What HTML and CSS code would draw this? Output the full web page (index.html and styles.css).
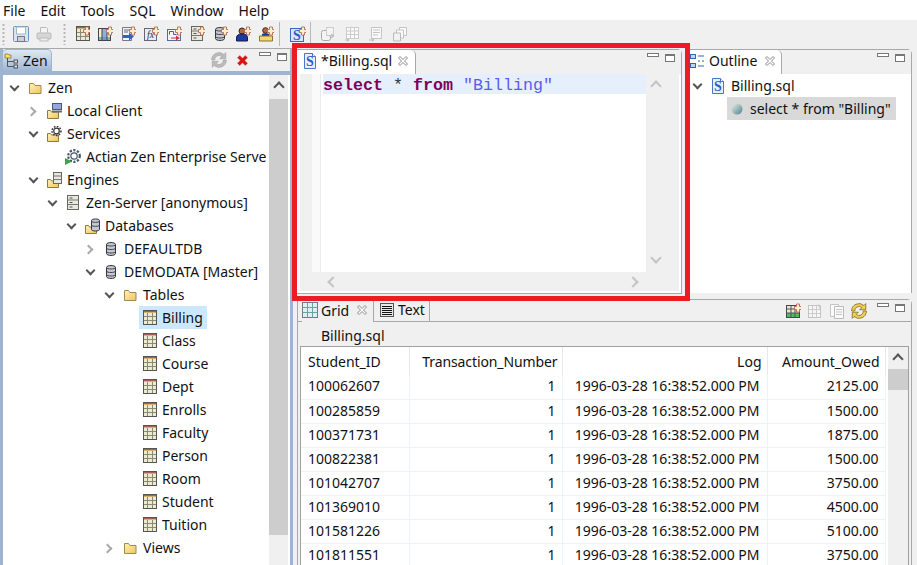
FILE: index.html
```html
<!DOCTYPE html>
<html>
<head>
  <meta charset="UTF-8">
  <title>Zen Explorer</title>
  <link rel="stylesheet" href="styles.css">
</head>
<body>
  <!-- Icon sheet -->
  <svg class="icon-sheet" xmlns="http://www.w3.org/2000/svg">
    <defs>
      <linearGradient id="folderFill" x1="0" y1="0" x2="1" y2="1">
        <stop offset="0" stop-color="#fdf3b8"/><stop offset="1" stop-color="#f0c45c"/>
      </linearGradient>
      <linearGradient id="ballFill" x1="0" y1="0" x2="1" y2="1">
        <stop offset="0" stop-color="#e8f2e8"/><stop offset="1" stop-color="#4f7f8f"/>
      </linearGradient>
      <symbol id="plus" viewBox="0 0 16 16">
        <path d="M9.5 3.500h2v-2.500h3v2.500h2v3h-2v2.500h-3v-2.500h-2z" fill="#fdf0c8" stroke="#b8685c" stroke-width=".9"/>
      </symbol>
      <symbol id="table" viewBox="0 0 16 16">
        <rect x="2.500" y=".5" width="13" height="14" fill="#ecebd0" stroke="#555"/>
        <path d="M3 1.500h12" stroke="#a8605c"/>
        <path d="M3 2.500h12" stroke="#d8b070"/>
        <path d="M3 6.500h12M3 10.500h12M6.500 3v11M11.500 3v11" stroke="#8a8a78"/>
      </symbol>
      <symbol id="folder" viewBox="0 0 16 16">
        <path d="M2.500 13.500v-10h4l1.500 2h6v8z" fill="url(#folderFill)" stroke="#a08a50"/>
      </symbol>
      <symbol id="folder-low" viewBox="0 0 16 16">
        <path d="M1.500 15.500v-8h3l1 1.500h7v6.500z" fill="url(#folderFill)" stroke="#8f7a40"/>
      </symbol>
      <symbol id="monitor" viewBox="0 0 16 16">
        <rect x="6.500" y=".5" width="9" height="6" fill="#8fa8e0" stroke="#556"/>
        <path d="M6 8.500h10" stroke="#667" stroke-width="2"/>
      </symbol>
      <symbol id="cog" viewBox="0 0 16 16">
        <circle cx="10.500" cy="5" r="2.800" fill="#fff" stroke="#333" stroke-width="1.200"/>
        <circle cx="10.500" cy="5" r="4.500" fill="none" stroke="#333" stroke-width="1.500" stroke-dasharray="1.500 1.500"/>
      </symbol>
      <symbol id="rack" viewBox="0 0 16 16">
        <rect x="2.500" y=".5" width="11" height="14" fill="#e8e8dc" stroke="#666"/>
        <path d="M3 5h10M3 9.500h10" stroke="#777"/>
        <path d="M4.500 3h3M4.500 7.500h3M4.500 12h3" stroke="#555"/>
      </symbol>
      <symbol id="rack-small" viewBox="0 0 16 16">
        <rect x="7.500" y=".5" width="8" height="11" fill="#e8e8dc" stroke="#666"/>
        <path d="M8 4h7M8 7.500h7" stroke="#777"/>
      </symbol>
      <symbol id="db" viewBox="0 0 16 16">
        <path d="M3.500 3.500c0-2.600 9-2.600 9 0v9c0 2.600-9 2.600-9 0z" fill="#c4c8d0" stroke="#333"/>
        <path d="M3.500 3.500c0 2 9 2 9 0M3.500 7c0 2 9 2 9 0M3.500 10.500c0 2 9 2 9 0" fill="none" stroke="#445"/>
      </symbol>
      <symbol id="db-small" viewBox="0 0 16 16">
        <path d="M7.500 2.500c0-2 8-2 8 0v9c0 2-8 2-8 0z" fill="#c4c8d0" stroke="#334"/>
        <path d="M7.500 3c0 1.800 8 1.800 8 0M7.500 7c0 1.800 8 1.800 8 0" fill="none" stroke="#445"/>
      </symbol>
      <symbol id="gear-run" viewBox="0 0 16 16">
        <circle cx="9" cy="7" r="3.200" fill="#fff" stroke="#456" stroke-width="1.200"/>
        <circle cx="9" cy="7" r="5.800" fill="none" stroke="#456" stroke-width="2.200" stroke-dasharray="2.200 1.500"/>
        <path d="M0 9l7 3.500-7 3.500z" fill="#3ea04a"/>
      </symbol>
      <symbol id="sql" viewBox="0 0 16 16">
        <path d="M2.500 .5h8l3 3v12h-11z" fill="#eaf0fb" stroke="#4a74c4"/>
        <path d="M10.500 .5v3h3" fill="#fff" stroke="#4a74c4"/>
        <text x="8" y="13" class="svg-s">S</text>
      </symbol>
      <symbol id="sql-box" viewBox="0 0 16 16">
        <rect x=".5" y="2.500" width="13" height="13" fill="#d8e4f8" stroke="#3f66b8"/>
        <text x="7" y="13.500" class="svg-s">S</text>
      </symbol>
      <symbol id="close-x" viewBox="0 0 12 12">
        <path d="M1.500 3l1.500-1.500 3 3 3-3 1.500 1.500-3 3 3 3-1.500 1.500-3-3-3 3-1.500-1.500 3-3z" fill="#fff" stroke="#8c8c8c"/>
      </symbol>
      <symbol id="save" viewBox="0 0 16 16">
        <rect x=".500" y=".500" width="15" height="15" rx="1" fill="#d8e6f4" stroke="#6f93c0"/>
        <rect x="3.500" y="1" width="9" height="7" fill="#fff" stroke="#9fb6d0"/>
        <rect x="4.500" y="10.500" width="7" height="5" fill="#cfcfcf" stroke="#778"/>
      </symbol>
      <symbol id="print" viewBox="0 0 16 16">
        <path d="M4.500 6.500v-5h6l1 1v4" fill="#f4f4f4" stroke="#bbb"/>
        <rect x="1" y="7" width="14" height="6" rx="1" fill="#d6d6d6" stroke="#bbb"/>
        <rect x="4" y="12" width="8" height="3" fill="#eee" stroke="#bbb"/>
      </symbol>
      <symbol id="view" viewBox="0 0 16 16">
        <rect x="1.500" y="2.500" width="12" height="12" fill="#f4f0c0" stroke="#445"/>
        <rect x="5" y="3" width="5" height="11" fill="#8fb0d8"/>
        <path d="M2 12.500h11" stroke="#5a9ac0" stroke-width="3" opacity=".7"/>
        <path d="M5 3v11M10 3v11" stroke="#445"/>
      </symbol>
      <symbol id="proc" viewBox="0 0 16 16">
        <path d="M2.500 1.500h9v13h-9z" fill="#f4f4f4" stroke="#778"/>
        <path d="M4 4h6M4 6h4" stroke="#667"/>
        <path d="M3 9h6v-2.500l5 4-5 4v-2.500h-6z" fill="#2f64c0"/>
      </symbol>
      <symbol id="fx" viewBox="0 0 16 16">
        <rect x="1.500" y="2.500" width="12" height="12" fill="#e8ecf4" stroke="#667"/>
        <text x="7.500" y="12" class="svg-fx">fx</text>
      </symbol>
      <symbol id="trigger" viewBox="0 0 16 16">
        <rect x="1.500" y="3.500" width="13" height="11" fill="#f4f4fa" stroke="#5a6a9a"/>
        <path d="M3.500 8.500v-3h4v3h3" fill="none" stroke="#3a5fb0"/>
        <path d="M5 11.500h5v-2l4 2.500-4 2.500v-2h-5z" fill="#d03838"/>
      </symbol>
      <symbol id="user" viewBox="0 0 16 16">
        <circle cx="7" cy="5" r="3" fill="#b06840" stroke="#402820"/>
        <path d="M1.500 15v-3c0-3 2-4 5.500-4s5.500 1 5.500 4v3z" fill="#1c3aa0" stroke="#101c50"/>
      </symbol>
      <symbol id="user-folder" viewBox="0 0 16 16">
        <circle cx="7.500" cy="4.500" r="2.800" fill="#b06840" stroke="#402820"/>
        <path d="M4 8c1-1 6-1 7 0v2h-7z" fill="#1c3aa0"/>
        <path d="M1.500 15v-5h13v5z" fill="#f5d670" stroke="#8a7430"/>
      </symbol>
      <symbol id="dim-join" viewBox="0 0 16 16">
        <rect x="1.500" y="4.500" width="9" height="10" rx="2" fill="#f4f4f4" stroke="#aaa"/>
        <rect x="6.500" y="1.500" width="7" height="8" fill="#f4f4f4" stroke="#ccc"/>
        <path d="M9 10h5M11 8l3 2-3 2" fill="none" stroke="#bbb"/>
      </symbol>
      <symbol id="dim-grid" viewBox="0 0 16 16">
        <rect x="2.500" y="1.500" width="12" height="11" fill="#fafafa" stroke="#ccc"/>
        <path d="M2.500 5h12M2.500 8.500h12M6.500 1.500v11M10.500 1.500v11" stroke="#ccc"/>
        <path d="M1 14h4M3 12.500l2 1.500-2 1.500" fill="none" stroke="#bbb"/>
      </symbol>
      <symbol id="dim-doc" viewBox="0 0 16 16">
        <path d="M3.500 1.500h10v11h-10z" fill="#fafafa" stroke="#c4c4c4"/>
        <path d="M5 4h7M5 6.500h7M5 9h5" stroke="#c4c4c4"/>
        <path d="M1 14h5M4 12.500l2 1.500-2 1.500" fill="none" stroke="#bbb"/>
      </symbol>
      <symbol id="dim-copy" viewBox="0 0 16 16">
        <path d="M7.500 1.500h7v8h-7z" fill="#fafafa" stroke="#c4c4c4"/>
        <path d="M4.500 4h7v8h-7z" fill="#fafafa" stroke="#c4c4c4"/>
        <path d="M1.500 7h7v8h-7z" fill="#f2f2f2" stroke="#bbb"/>
      </symbol>
      <symbol id="sync-off" viewBox="1.500 1.500 13 13">
        <path d="M2 8a6 6 0 0 1 10-4.500l1.500-1.500v5h-5l1.800-1.800a3.500 3.500 0 0 0-5.800 2.800zM14 8a6 6 0 0 1-10 4.500l-1.500 1.500v-5h5l-1.800 1.800a3.500 3.500 0 0 0 5.800-2.800z" fill="#bbb" stroke="#a4a4a4" stroke-width=".5"/>
      </symbol>
      <symbol id="sync-on" viewBox="1.500 1.500 13 13">
        <path d="M2 8a6 6 0 0 1 10-4.500l1.500-1.500v5h-5l1.800-1.800a3.500 3.500 0 0 0-5.800 2.800zM14 8a6 6 0 0 1-10 4.500l-1.500 1.500v-5h5l-1.800 1.800a3.500 3.500 0 0 0 5.800-2.800z" fill="#f0d050" stroke="#776020" stroke-width=".6"/>
      </symbol>
      <symbol id="red-x" viewBox="0 0 12 12">
        <path d="M.5 3l2.500-2.500 3 3 3-3 2.500 2.500-3 3 3 3-2.500 2.500-3-3-3 3-2.500-2.500 3-3z" fill="#e01010" stroke="#c06060" stroke-width=".5"/>
      </symbol>
      <symbol id="tree-tab" viewBox="0 0 16 16">
        <path d="M1 5v-4h3l1 1h2v3z" fill="#f8dc70" stroke="#907830" stroke-width=".8"/>
        <path d="M3.500 5v8.500h6M3.500 8.500h6" fill="none" stroke="#555"/>
        <rect x="10" y="7" width="3.500" height="3" fill="#dde" stroke="#333" stroke-width=".8"/>
        <rect x="10" y="12" width="3.500" height="3" fill="#dde" stroke="#333" stroke-width=".8"/>
      </symbol>
      <symbol id="outline-tab" viewBox="0 0 16 16">
        <rect x=".5" y="1.500" width="5" height="4" fill="#b8d8f4" stroke="#2a68b8"/>
        <rect x=".5" y="10.500" width="5" height="4" fill="#b8d8f4" stroke="#2a68b8"/>
        <path d="M8 3h6M8 8h2M12 8h2M8 13h6" stroke="#2a68b8"/>
      </symbol>
      <symbol id="grid-tab" viewBox="0 0 16 16">
        <rect x=".5" y=".5" width="15" height="15" fill="#dff0ee" stroke="#778"/>
        <path d="M.5 5.500h15M.5 10.500h15M5.500 .5v15M10.500 .5v15" stroke="#60a8a4"/>
      </symbol>
      <symbol id="text-tab" viewBox="0 0 16 16">
        <rect x="1.500" y="1.500" width="13" height="13" fill="#e8e8e8" stroke="#555"/>
        <path d="M3 4.500h10M3 6.500h10M3 8.500h10M3 10.500h10M3 12.500h10" stroke="#111"/>
      </symbol>
      <symbol id="grid-add" viewBox="0 0 16 16">
        <rect x="1.500" y="2.500" width="13" height="12" fill="#e8e8c8" stroke="#445"/>
        <path d="M2 10h12v4h-12z" fill="#58b858"/>
        <path d="M2 6h12M2 10h12M6 3v11M10 3v11" stroke="#556"/>
      </symbol>
      <symbol id="grid-edit" viewBox="0 0 16 16">
        <rect x="1.500" y="2.500" width="12" height="12" fill="#f6f6f6" stroke="#c4c4c4"/>
        <path d="M2 6.500h11M2 10.500h11M5.500 3v11M9.500 3v11" stroke="#ccc"/>
        <path d="M11 1l3 2-2 3z" fill="#ccc"/>
      </symbol>
      <symbol id="grid-copy" viewBox="0 0 16 16">
        <path d="M1.500 1.500h8v12h-8z" fill="#fafafa" stroke="#c4c4c4"/>
        <path d="M5.500 3.500h9v12h-9z" fill="#fafafa" stroke="#bbb"/>
        <path d="M7 6.500h6M7 9h6M7 11.500h6" stroke="#c4c4c4"/>
      </symbol>
    </defs>
  </svg>

  <div class="menubar">
    <span class="menu-item">File</span>
    <span class="menu-item">Edit</span>
    <span class="menu-item">Tools</span>
    <span class="menu-item">SQL</span>
    <span class="menu-item">Window</span>
    <span class="menu-item">Help</span>
  </div>

  <div class="toolbar">
    <div class="grip"></div>
    <div class="tool-group file-tools">
      <svg class="tool-icon"><use href="#save"/></svg>
      <svg class="tool-icon"><use href="#print"/></svg>
    </div>
    <div class="grip"></div>
    <div class="tool-group new-tools">
      <svg class="tool-icon"><use href="#table"/><use href="#plus"/></svg>
      <svg class="tool-icon"><use href="#view"/><use href="#plus"/></svg>
      <svg class="tool-icon"><use href="#proc"/><use href="#plus"/></svg>
      <svg class="tool-icon"><use href="#fx"/><use href="#plus"/></svg>
      <svg class="tool-icon"><use href="#trigger"/><use href="#plus"/></svg>
      <svg class="tool-icon"><use href="#rack"/><use href="#plus"/></svg>
      <svg class="tool-icon"><use href="#db"/><use href="#plus"/></svg>
      <svg class="tool-icon"><use href="#user"/><use href="#plus"/></svg>
      <svg class="tool-icon"><use href="#user-folder"/><use href="#plus"/></svg>
    </div>
    <div class="tool-sep"></div>
    <svg class="tool-icon"><use href="#sql-box"/><use href="#plus"/></svg>
    <div class="tool-sep short"></div>
    <div class="tool-group dim-tools">
      <svg class="tool-icon"><use href="#dim-join"/></svg>
      <svg class="tool-icon"><use href="#dim-grid"/></svg>
      <svg class="tool-icon"><use href="#dim-doc"/></svg>
      <svg class="tool-icon"><use href="#dim-copy"/></svg>
    </div>
  </div>

  <div class="workbench">
    <div class="explorer">
      <div class="explorer-tabs">
        <div class="explorer-tab">
          <svg class="tab-icon"><use href="#tree-tab"/></svg>
          <span>Zen</span>
        </div>
        <div class="pane-actions">
          <svg class="action-icon sync-icon"><use href="#sync-off"/></svg>
          <svg class="red-x"><use href="#red-x"/></svg>
          <span class="pane-min"></span>
          <span class="pane-max"></span>
        </div>
      </div>
      <div class="explorer-body">
        <div class="tree">
          <div class="tree-row lvl-0"><span class="twist open"></span><span class="node"><svg class="node-icon"><use href="#folder"/></svg>Zen</span></div>
          <div class="tree-row lvl-1"><span class="twist closed"></span><span class="node"><svg class="node-icon"><use href="#folder-low"/><use href="#monitor"/></svg>Local Client</span></div>
          <div class="tree-row lvl-1"><span class="twist open"></span><span class="node"><svg class="node-icon"><use href="#folder-low"/><use href="#cog"/></svg>Services</span></div>
          <div class="tree-row lvl-2"><span class="twist"></span><span class="node"><svg class="node-icon"><use href="#gear-run"/></svg>Actian Zen Enterprise Server</span></div>
          <div class="tree-row lvl-1"><span class="twist open"></span><span class="node"><svg class="node-icon"><use href="#folder-low"/><use href="#rack-small"/></svg>Engines</span></div>
          <div class="tree-row lvl-2"><span class="twist open"></span><span class="node"><svg class="node-icon"><use href="#rack"/></svg>Zen-Server [anonymous]</span></div>
          <div class="tree-row lvl-3"><span class="twist open"></span><span class="node"><svg class="node-icon"><use href="#folder-low"/><use href="#db-small"/></svg>Databases</span></div>
          <div class="tree-row lvl-4"><span class="twist closed"></span><span class="node"><svg class="node-icon"><use href="#db"/></svg>DEFAULTDB</span></div>
          <div class="tree-row lvl-4"><span class="twist open"></span><span class="node"><svg class="node-icon"><use href="#db"/></svg>DEMODATA [Master]</span></div>
          <div class="tree-row lvl-5"><span class="twist open"></span><span class="node"><svg class="node-icon"><use href="#folder"/></svg>Tables</span></div>
          <div class="tree-row lvl-6"><span class="twist"></span><span class="node selected"><svg class="node-icon"><use href="#table"/></svg>Billing</span></div>
          <div class="tree-row lvl-6"><span class="twist"></span><span class="node"><svg class="node-icon"><use href="#table"/></svg>Class</span></div>
          <div class="tree-row lvl-6"><span class="twist"></span><span class="node"><svg class="node-icon"><use href="#table"/></svg>Course</span></div>
          <div class="tree-row lvl-6"><span class="twist"></span><span class="node"><svg class="node-icon"><use href="#table"/></svg>Dept</span></div>
          <div class="tree-row lvl-6"><span class="twist"></span><span class="node"><svg class="node-icon"><use href="#table"/></svg>Enrolls</span></div>
          <div class="tree-row lvl-6"><span class="twist"></span><span class="node"><svg class="node-icon"><use href="#table"/></svg>Faculty</span></div>
          <div class="tree-row lvl-6"><span class="twist"></span><span class="node"><svg class="node-icon"><use href="#table"/></svg>Person</span></div>
          <div class="tree-row lvl-6"><span class="twist"></span><span class="node"><svg class="node-icon"><use href="#table"/></svg>Room</span></div>
          <div class="tree-row lvl-6"><span class="twist"></span><span class="node"><svg class="node-icon"><use href="#table"/></svg>Student</span></div>
          <div class="tree-row lvl-6"><span class="twist"></span><span class="node"><svg class="node-icon"><use href="#table"/></svg>Tuition</span></div>
          <div class="tree-row lvl-5"><span class="twist closed"></span><span class="node"><svg class="node-icon"><use href="#folder"/></svg>Views</span></div>
        </div>
        <div class="scrollbar tree-scroll">
          <span class="arrow-up"></span>
          <div class="thumb"></div>
        </div>
      </div>
    </div>

    <div class="right-side">
      <div class="top-row">
        <div class="editor-pane">
          <div class="tab-strip">
            <div class="tab white-tab editor-tab">
              <svg class="tab-icon"><use href="#sql"/></svg>
              <span>*Billing.sql</span>
              <svg class="tab-close"><use href="#close-x"/></svg>
            </div>
            <div class="pane-actions">
              <span class="pane-min"></span>
              <span class="pane-max"></span>
            </div>
          </div>
          <div class="editor-body">
            <div class="ruler"></div>
            <div class="ruler-light"></div>
            <div class="code-area">
              <div class="code-line"><span class="kw">select</span> <span class="star">*</span> <span class="kw">from</span> <span class="str">"Billing"</span></div>
            </div>
            <div class="editor-vbar"><span class="arrow-up dim"></span><span class="arrow-down dim"></span></div>
            <div class="editor-hbar"><span class="arrow-left"></span><span class="arrow-right"></span></div>
          </div>
        </div>

        <div class="outline-pane">
          <div class="tab-strip">
            <div class="tab white-tab outline-tab">
              <svg class="tab-icon"><use href="#outline-tab"/></svg>
              <span>Outline</span>
              <svg class="tab-close"><use href="#close-x"/></svg>
            </div>
            <div class="pane-actions">
              <span class="pane-min"></span>
              <span class="pane-max"></span>
            </div>
          </div>
          <div class="outline-body">
            <div class="outline-row"><span class="twist open"></span><span class="node"><svg class="node-icon"><use href="#sql"/></svg>Billing.sql</span></div>
            <div class="outline-row child"><span class="node stmt"><svg class="ball" viewBox="0 0 12 12"><circle cx="6" cy="6" r="5.500" fill="url(#ballFill)"/></svg>select * from "Billing"</span></div>
          </div>
        </div>
      </div>

      <div class="results-pane">
        <div class="tab-strip results-strip">
          <div class="tab grid-tab">
            <svg class="tab-icon"><use href="#grid-tab"/></svg>
            <span>Grid</span>
            <svg class="tab-close"><use href="#close-x"/></svg>
          </div>
          <div class="tab text-tab">
            <svg class="tab-icon"><use href="#text-tab"/></svg>
            <span>Text</span>
          </div>
          <div class="pane-actions">
            <svg class="action-icon"><use href="#grid-add"/><use href="#plus"/></svg>
            <svg class="action-icon"><use href="#grid-edit"/></svg>
            <svg class="action-icon"><use href="#grid-copy"/></svg>
            <svg class="action-icon last-action"><use href="#sync-on"/></svg>
            <span class="pane-min"></span>
            <span class="pane-max"></span>
          </div>
        </div>
        <div class="results-label">Billing.sql</div>
        <div class="grid-frame">
          <table class="data-grid">
            <thead>
              <tr><th class="col-id">Student_ID</th><th class="col-num">Transaction_Number</th><th class="col-log">Log</th><th class="col-amt">Amount_Owed</th></tr>
            </thead>
            <tbody>
              <tr><td>100062607</td><td>1</td><td class="cell-log">1996-03-28 16:38:52.000 PM</td><td>2125.00</td></tr>
              <tr><td>100285859</td><td>1</td><td class="cell-log">1996-03-28 16:38:52.000 PM</td><td>1500.00</td></tr>
              <tr><td>100371731</td><td>1</td><td class="cell-log">1996-03-28 16:38:52.000 PM</td><td>1875.00</td></tr>
              <tr><td>100822381</td><td>1</td><td class="cell-log">1996-03-28 16:38:52.000 PM</td><td>1500.00</td></tr>
              <tr><td>101042707</td><td>1</td><td class="cell-log">1996-03-28 16:38:52.000 PM</td><td>3750.00</td></tr>
              <tr><td>101369010</td><td>1</td><td class="cell-log">1996-03-28 16:38:52.000 PM</td><td>4500.00</td></tr>
              <tr><td>101581226</td><td>1</td><td class="cell-log">1996-03-28 16:38:52.000 PM</td><td>5100.00</td></tr>
              <tr><td>101811551</td><td>1</td><td class="cell-log">1996-03-28 16:38:52.000 PM</td><td>3750.00</td></tr>
            </tbody>
          </table>
          <div class="scrollbar grid-scroll">
            <span class="arrow-up"></span>
            <div class="thumb"></div>
          </div>
        </div>
      </div>
    </div>
  </div>

  <!-- Red callout drawn over the editor -->
  <div class="callout"></div>
</body>
</html>
```

FILE: styles.css
```css
html, body {
  height: 100%;
}
body {
  margin: 0;
  height: 565px;
  overflow: hidden;
  position: relative;
  display: flex;
  flex-direction: column;
  background-color: #f0f0f0;
  font-family: "Noto Sans", sans-serif;
  font-size: 14px;
  color: #111;
}
svg {
  display: block;
  flex: none;
}
.icon-sheet {
  position: absolute;
  width: 0;
  height: 0;
}
.svg-s {
  font-family: "Liberation Serif", serif;
  font-weight: bold;
  font-size: 14px;
  fill: #2f5cc0;
  text-anchor: middle;
}
.svg-fx {
  font-family: "Liberation Serif", serif;
  font-style: italic;
  font-size: 10px;
  fill: #334;
  text-anchor: middle;
}

/* menu and toolbar */
.menubar {
  height: 20px;
  flex: none;
  display: flex;
  align-items: center;
  background-color: #fff;
}
.menu-item {
  margin-left: 3px;
  margin-right: 12px;
}
.toolbar {
  height: 28px;
  flex: none;
  display: flex;
  align-items: center;
  box-sizing: border-box;
  padding-left: 2px;
}
.grip {
  width: 3px;
  height: 22px;
  background-image: radial-gradient(circle, #b4b4b4 1px, transparent 1.2px);
  background-size: 3px 4px;
}
.tool-group {
  display: flex;
  gap: 7px;
}
.file-tools {
  margin: 0 11px 0 8px;
}
.new-tools {
  margin-left: 8px;
}
.dim-tools {
  gap: 8px;
}
.tool-icon {
  width: 16px;
  height: 16px;
}
.tool-sep {
  width: 1px;
  height: 24px;
  background-color: #b8b8b8;
  margin: 0 10px 0 5px;
}
.tool-sep.short {
  margin: 0 9px 0 4px;
}

/* workbench */
.workbench {
  flex: 1;
  display: flex;
  min-height: 0;
}
.explorer {
  width: 293px;
  flex: none;
  display: flex;
  flex-direction: column;
  box-sizing: border-box;
  border-right: 3px solid #9fb4cf;
  border-left: 3px solid #9fb4cf;
}
.explorer-tabs {
  height: 27px;
  flex: none;
  display: flex;
  box-sizing: border-box;
  border-top: 1px solid #a8a8a8;
  border-bottom: 4px solid #9fb4cf;
  margin-left: -3px;
}
.explorer-tab {
  width: 50px;
  margin-left: 2px;
  display: flex;
  align-items: center;
  padding-left: 1px;
  box-sizing: border-box;
  border-radius: 5px 5px 0 0;
  border: 1px solid #9fb4cf;
  border-bottom: none;
  background: linear-gradient(#dfe8f2, #9db6d4);
}
.pane-actions {
  margin-left: auto;
  display: flex;
  align-items: flex-start;
}
.action-icon {
  width: 16px;
  height: 16px;
  margin-right: 6px;
  margin-top: 3px;
}
.last-action {
  margin-right: 10px;
}
.sync-icon {
  margin-top: 3px;
  margin-right: 10px;
}
.red-x {
  width: 11px;
  height: 11px;
  margin-top: 6px;
  margin-right: 11px;
}
.pane-min {
  width: 10px;
  height: 2px;
  margin-top: 3px;
  border: 1px solid #777;
  background-color: #fff;
  margin-right: 6px;
}
.pane-max {
  width: 8px;
  height: 5px;
  margin-top: 4px;
  border: 1px solid #777;
  border-top-width: 2px;
  background-color: #fff;
  margin-right: 6px;
}
.explorer-tabs .pane-max {
  margin-right: 3px;
}
.explorer-body {
  flex: 1;
  display: flex;
  background-color: #fff;
  min-height: 0;
}
.tree {
  width: 266px;
  flex: none;
  overflow: hidden;
  margin-left: -3px;
  padding-top: 1px;
}
.tree-row {
  height: 23px;
  display: flex;
  align-items: center;
  white-space: nowrap;
}
.lvl-0 { padding-left: 7px; }
.lvl-1 { padding-left: 26px; }
.lvl-2 { padding-left: 45px; }
.lvl-3 { padding-left: 64px; }
.lvl-4 { padding-left: 83px; }
.lvl-5 { padding-left: 102px; }
.lvl-6 { padding-left: 121px; }
.twist {
  width: 20px;
  height: 16px;
  flex: none;
  position: relative;
}
.twist.open::before,
.twist.closed::before {
  content: "";
  position: absolute;
  width: 5px;
  height: 5px;
  border-right: 2px solid #555;
  border-bottom: 2px solid #555;
}
.twist.open::before {
  left: 4px;
  top: 3px;
  transform: rotate(45deg);
}
.twist.closed::before {
  left: 2px;
  top: 5px;
  border-color: #aaa;
  transform: rotate(-45deg);
}
.node {
  display: flex;
  align-items: center;
  height: 23px;
  margin-left: -2px;
  padding: 0 4px 0 2px;
}
.node.selected {
  background-color: #cce8ff;
}
.node-icon {
  width: 16px;
  height: 16px;
  margin-right: 5px;
}
.scrollbar {
  flex: none;
  display: flex;
  flex-direction: column;
  align-items: center;
  background-color: #f0f0f0;
}
.tree-scroll {
  width: 19px;
  margin-left: 3px;
}
.tree-scroll .arrow-up {
  margin: 8px 0 8px;
}
.tree-scroll .thumb {
  width: 100%;
  height: 436px;
  background-color: #cdcdcd;
}
.arrow-up,
.arrow-down,
.arrow-left,
.arrow-right {
  display: block;
  width: 6px;
  height: 6px;
  border-left: 2px solid #555;
  border-top: 2px solid #555;
}
.arrow-up { transform: rotate(45deg); }
.arrow-up.dim,
.arrow-down,
.arrow-left,
.arrow-right { border-color: #c4c4c4; }
.arrow-down { transform: rotate(225deg); }
.arrow-left { transform: rotate(-45deg); }
.arrow-right { transform: rotate(135deg); }

/* right side */
.right-side {
  flex: 1;
  min-width: 0;
  padding: 1px 5px 0 4px;
  display: flex;
  flex-direction: column;
}
.top-row {
  height: 245px;
  flex: none;
  display: flex;
  gap: 8px;
}
.editor-pane {
  width: 385px;
  flex: none;
  display: flex;
  flex-direction: column;
  box-sizing: border-box;
  border-top: 1px solid #a8a8a8;
  border-right: 1px solid #a8a8a8;
  border-bottom: 1px solid #a8a8a8;
  border-radius: 0 5px 0 0;
  background-color: #fff;
}
.tab-strip {
  height: 24px;
  flex: none;
  display: flex;
  background-color: #f0f0f0;
}
.tab {
  display: flex;
  align-items: center;
  box-sizing: border-box;
  padding-bottom: 3px;
}
.white-tab {
  background-color: #fff;
  border-right: 1px solid #a8a8a8;
  border-radius: 0 5px 0 0;
}
.editor-tab {
  width: 119px;
  padding-left: 5px;
}
.outline-tab {
  width: 92px;
}
.tab-icon {
  width: 16px;
  height: 16px;
  margin-right: 3px;
}
.tab-close {
  width: 12px;
  height: 12px;
  margin-left: auto;
  margin-right: 5px;
}
.editor-tab .tab-close {
  margin-right: 6px;
}
.editor-body {
  flex: 1;
  position: relative;
  display: flex;
  margin: 0 2px 2px 3px;
  background-color: #f0f0f0;
}
.ruler {
  width: 12px;
  height: 198px;
  flex: none;
}
.ruler-light {
  width: 8px;
  height: 198px;
  flex: none;
  background-color: #fafafa;
  border-right: 1px solid #eaeaea;
}
.code-area {
  width: 325px;
  height: 198px;
  flex: none;
  box-sizing: border-box;
  background-color: #fff;
  padding-left: 2px;
}
.code-line {
  height: 20px;
  line-height: 24px;
  background-color: #e6f0fd;
  font-family: "Liberation Mono", monospace;
  font-size: 16.67px;
  white-space: pre;
}
.kw {
  font-weight: bold;
  color: #7f0055;
}
.star {
  color: #333;
}
.str {
  color: #5c5cf0;
}
.editor-vbar {
  flex: 1;
  height: 198px;
  display: flex;
  flex-direction: column;
  align-items: center;
  justify-content: space-between;
  padding: 8px 14px 10px 0;
  box-sizing: border-box;
}
.editor-hbar {
  position: absolute;
  left: 21px;
  right: 34px;
  top: 198px;
  height: 20px;
  display: flex;
  align-items: center;
  justify-content: space-between;
  padding: 0 8px;
}

.outline-pane {
  flex: 1;
  min-width: 0;
  display: flex;
  flex-direction: column;
  height: 244px;
  box-sizing: border-box;
  border-top: 1px solid #a8a8a8;
  border-right: 1px solid #a8a8a8;
  border-radius: 0 5px 0 0;
}
.outline-body {
  flex: 1;
  background-color: #fff;
}
.outline-row {
  height: 23px;
  display: flex;
  align-items: center;
}
.outline-row.child {
  padding-left: 39px;
}
.stmt {
  background-color: #d9d9d9;
  padding: 0 5px 0 4px;
}
.ball {
  width: 12px;
  height: 12px;
  margin-right: 7px;
}

.results-pane {
  flex: 1;
  margin-top: 5px;
  min-height: 0;
  display: flex;
  flex-direction: column;
  box-sizing: border-box;
  border-top: 1px solid #a8a8a8;
  border-left: 1px solid #a8a8a8;
  border-right: 1px solid #a8a8a8;
  border-radius: 0 5px 0 0;
}
.results-strip {
  height: 22px;
  box-sizing: border-box;
  border-bottom: 1px solid #a8a8a8;
  padding-left: 4px;
}
.results-strip .tab {
  padding-bottom: 2px;
}
.grid-tab {
  width: 72px;
  border-right: 1px solid #a8a8a8;
  height: 22px;
  background-color: #f0f0f0;
}
.text-tab {
  width: 56px;
  padding-left: 5px;
  border-right: 1px solid #a8a8a8;
}
.results-label {
  height: 24px;
  line-height: 28px;
  padding-left: 23px;
  flex: none;
}
.grid-frame {
  flex: 1;
  min-height: 0;
  display: flex;
  overflow: hidden;
  margin-left: 2px;
  border-top: 1px solid #a0a0a0;
  border-left: 1px solid #a0a0a0;
  border-right: 1px solid #a0a0a0;
  margin-right: 2px;
  background-color: #fff;
}
.data-grid {
  width: 584px;
  flex: none;
  table-layout: fixed;
  border-collapse: collapse;
  align-self: flex-start;
}
.data-grid th {
  height: 28px;
  box-sizing: border-box;
  font-weight: normal;
  text-align: right;
  padding: 0 5px 0 0;
  border-right: 1px solid #e8e8e8;
}
.data-grid th.col-num {
  padding-right: 4px;
  letter-spacing: -0.1px;
}
.data-grid td {
  height: 24px;
  box-sizing: border-box;
  text-align: right;
  padding: 0 6px 2px 0;
  border-right: 1px solid #eef3fa;
  border-bottom: 1px solid #eef1f6;
}
.data-grid td.cell-log {
  padding-right: 7px;
}
.data-grid th:first-child,
.data-grid td:first-child {
  text-align: left;
  padding-left: 7px;
}
.col-id { width: 108px; }
.col-num { width: 153px; }
.col-log { width: 205px; }
.col-amt { width: 118px; }
.grid-scroll {
  width: 20px;
  margin-left: 2px;
}
.grid-scroll .arrow-up {
  margin: 8px 0 6px;
}
.grid-scroll .thumb {
  width: 100%;
  height: 21px;
  background-color: #cdcdcd;
}

.callout {
  position: absolute;
  left: 292px;
  top: 43px;
  width: 398px;
  height: 258px;
  box-sizing: border-box;
  border: 5px solid #ed1c24;
}
```
